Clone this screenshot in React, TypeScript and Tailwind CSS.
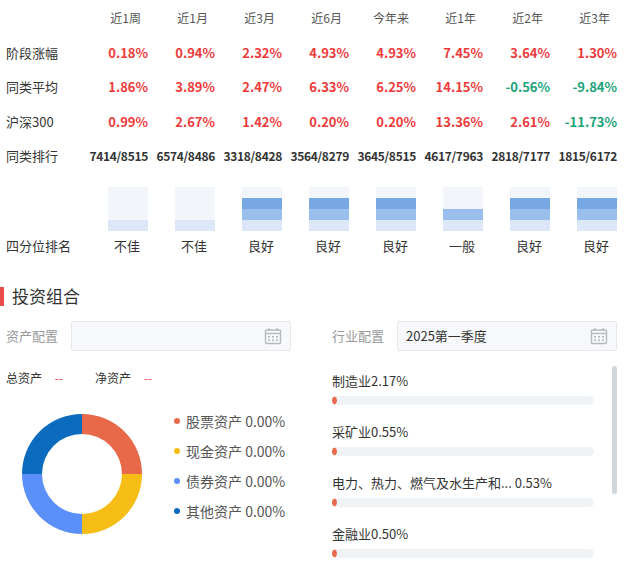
import React from "react";

const cols = ["近1周","近1月","近3月","近6月","今年来","近1年","近2年","近3年"];
const rows: [string, string[], boolean][] = [
  ["阶段涨幅", ["0.18%","0.94%","2.32%","4.93%","4.93%","7.45%","3.64%","1.30%"], false],
  ["同类平均", ["1.86%","3.89%","2.47%","6.33%","6.25%","14.15%","-0.56%","-9.84%"], false],
  ["沪深300", ["0.99%","2.67%","1.42%","0.20%","0.20%","13.36%","2.61%","-11.73%"], false],
  ["同类排行", ["7414/8515","6574/8486","3318/8428","3564/8279","3645/8515","4617/7963","2818/7177","1815/6172"], true],
];
const q = [1,1,3,3,3,2,3,3];
const ql = ["不佳","不佳","良好","良好","良好","一般","良好","良好"];

function Box({ n }: { n: number }) {
  const segs = [4,3,2,1].map((i) => {
    let c = "bg-[#f2f6fb]";
    if (i === 1 && n >= 1) c = "bg-[#dce8f8]";
    if (i === 2 && n >= 2) c = "bg-[#9bbfec]";
    if (i === 3 && n >= 3) c = "bg-[#77a8e4]";
    if (i === 4 && n >= 4) c = "bg-[#4a8ad8]";
    return <div key={i} className={`h-[11px] ${c}`} />;
  });
  return <div className="w-[40px] flex flex-col">{segs}</div>;
}

function Cal() {
  return (
    <svg width="18" height="18" viewBox="0 0 18 18" fill="none" stroke="#b5b9c0" strokeWidth="1.4">
      <rect x="1.5" y="3" width="15" height="13.5" rx="1" />
      <line x1="1.5" y1="6.5" x2="16.5" y2="6.5" />
      <line x1="5" y1="1" x2="5" y2="4" /><line x1="13" y1="1" x2="13" y2="4" />
      <g fill="#b5b9c0" stroke="none">
        <rect x="4" y="9" width="2" height="1.6" /><rect x="8" y="9" width="2" height="1.6" /><rect x="12" y="9" width="2" height="1.6" />
        <rect x="4" y="12.5" width="2" height="1.6" /><rect x="8" y="12.5" width="2" height="1.6" /><rect x="12" y="12.5" width="2" height="1.6" />
      </g>
    </svg>
  );
}

export default function App() {
  const font = { fontFamily: '"Noto Sans CJK SC", "Liberation Sans", sans-serif' };
  const legend: [string, string][] = [["#e8684a","股票资产"],["#f6bd16","现金资产"],["#5b8ff9","债券资产"],["#0b6cbf","其他资产"]];
  const ind = ["制造业2.17%","采矿业0.55%","电力、热力、燃气及水生产和... 0.53%","金融业0.50%"];
  return (
    <div className="w-[637px] h-[574px] bg-white text-[#333] overflow-hidden" style={font}>
      <div className="grid grid-cols-[90px_repeat(8,67px)] text-[12px]">
        <div className="h-[35px]" />
        {cols.map((c) => <div key={c} className="h-[35px] flex items-center justify-end pr-[16px] text-[#555]">{c}</div>)}
        {rows.map(([l, v, rank]) => (
          <React.Fragment key={l}>
            <div className="h-[34.5px] flex items-center pl-[6px] text-[13px]">{l}</div>
            {v.map((x, i) => (
              <div key={i} className={`h-[34.5px] flex items-center justify-end pr-[9px] font-bold ${rank ? "text-[12px] text-[#333] tracking-[-0.3px]" : "text-[13px] " + (x.startsWith("-") ? "text-[#1aa37a]" : "text-[#ee3a3a]")}`}>{x}</div>
            ))}
          </React.Fragment>
        ))}
        <div className="h-[52px]" />
        {q.map((n, i) => <div key={i} className="pt-[14px] flex justify-end pr-[9px]"><Box n={n} /></div>)}
        <div className="h-[30px] flex items-center pl-[6px] text-[13px]">四分位排名</div>
        {ql.map((x, i) => <div key={i} className="h-[30px] flex items-center justify-end pr-[17px] text-[13px]">{x}</div>)}
      </div>
      <div className="flex items-center mt-[23px] h-[24px]">
        <div className="w-[4px] h-[19px] bg-[#e94b4b]" />
        <div className="ml-[8px] text-[17px] text-[#333]">投资组合</div>
      </div>
      <div className="flex mt-[13px] text-[13px]">
        <div className="flex items-center w-[332px]">
          <span className="pl-[6px] w-[71px] text-[#999]">资产配置</span>
          <div className="w-[220px] h-[30px] bg-[#f7f8fa] border border-[#e6e8eb] rounded-[2px] flex items-center justify-end pr-[8px]"><Cal /></div>
        </div>
        <div className="flex items-center">
          <span className="w-[65px] text-[#999]">行业配置</span>
          <div className="w-[220px] h-[30px] bg-[#f7f8fa] border border-[#e6e8eb] rounded-[2px] flex items-center justify-between pl-[8px] pr-[8px] text-[#333]">2025第一季度<Cal /></div>
        </div>
      </div>
      <div className="flex mt-[14px]">
        <div className="w-[332px] pt-[4px]">
          <div className="flex text-[12px] pl-[6px] gap-[14px]">
            <span>总资产 <span className="text-[#e94b4b] ml-[10px]">--</span></span>
            <span className="ml-[18px]">净资产 <span className="text-[#e94b4b] ml-[10px]">--</span></span>
          </div>
          <div className="flex mt-[25px]">
            <svg width="164" height="124" viewBox="0 0 164 124">
              <g transform="translate(82,62)">
                <path d="M0,-60 A60,60 0 0 1 60,0 L40,0 A40,40 0 0 0 0,-40 Z" fill="#e8684a" />
                <path d="M60,0 A60,60 0 0 1 0,60 L0,40 A40,40 0 0 0 40,0 Z" fill="#f6bd16" />
                <path d="M0,60 A60,60 0 0 1 -60,0 L-40,0 A40,40 0 0 0 0,40 Z" fill="#5b8ff9" />
                <path d="M-60,0 A60,60 0 0 1 0,-60 L0,-40 A40,40 0 0 0 -40,0 Z" fill="#0b6cbf" />
              </g>
            </svg>
            <div className="flex flex-col gap-[8px] ml-[10px] -mt-[2px] text-[14px] text-[#555]">
              {legend.map(([c, t]) => (
                <div key={t} className="flex items-center h-[22px]">
                  <span className="w-[6px] h-[6px] rounded-full mr-[6px]" style={{ background: c }} />
                  {t} 0.00%
                </div>
              ))}
            </div>
          </div>
        </div>
        <div className="relative flex-1 mt-[1px]">
          <div className="flex flex-col w-[262px]">
            {ind.map((t) => (
              <div key={t} className="h-[51px] pt-[6px]">
                <div className="text-[13px] text-[#333] leading-[18px]">{t}</div>
                <div className="mt-[6px] h-[9px] w-[262px] rounded-full bg-[#f0f3f6] overflow-hidden">
                  <div className="h-full w-[5px] bg-[#e8684a] rounded-r-full" />
                </div>
              </div>
            ))}
          </div>
          <div className="absolute left-[280px] top-[0px] w-[5px] h-[128px] rounded-full bg-[#cfd6de]" />
        </div>
      </div>
    </div>
  );
}
